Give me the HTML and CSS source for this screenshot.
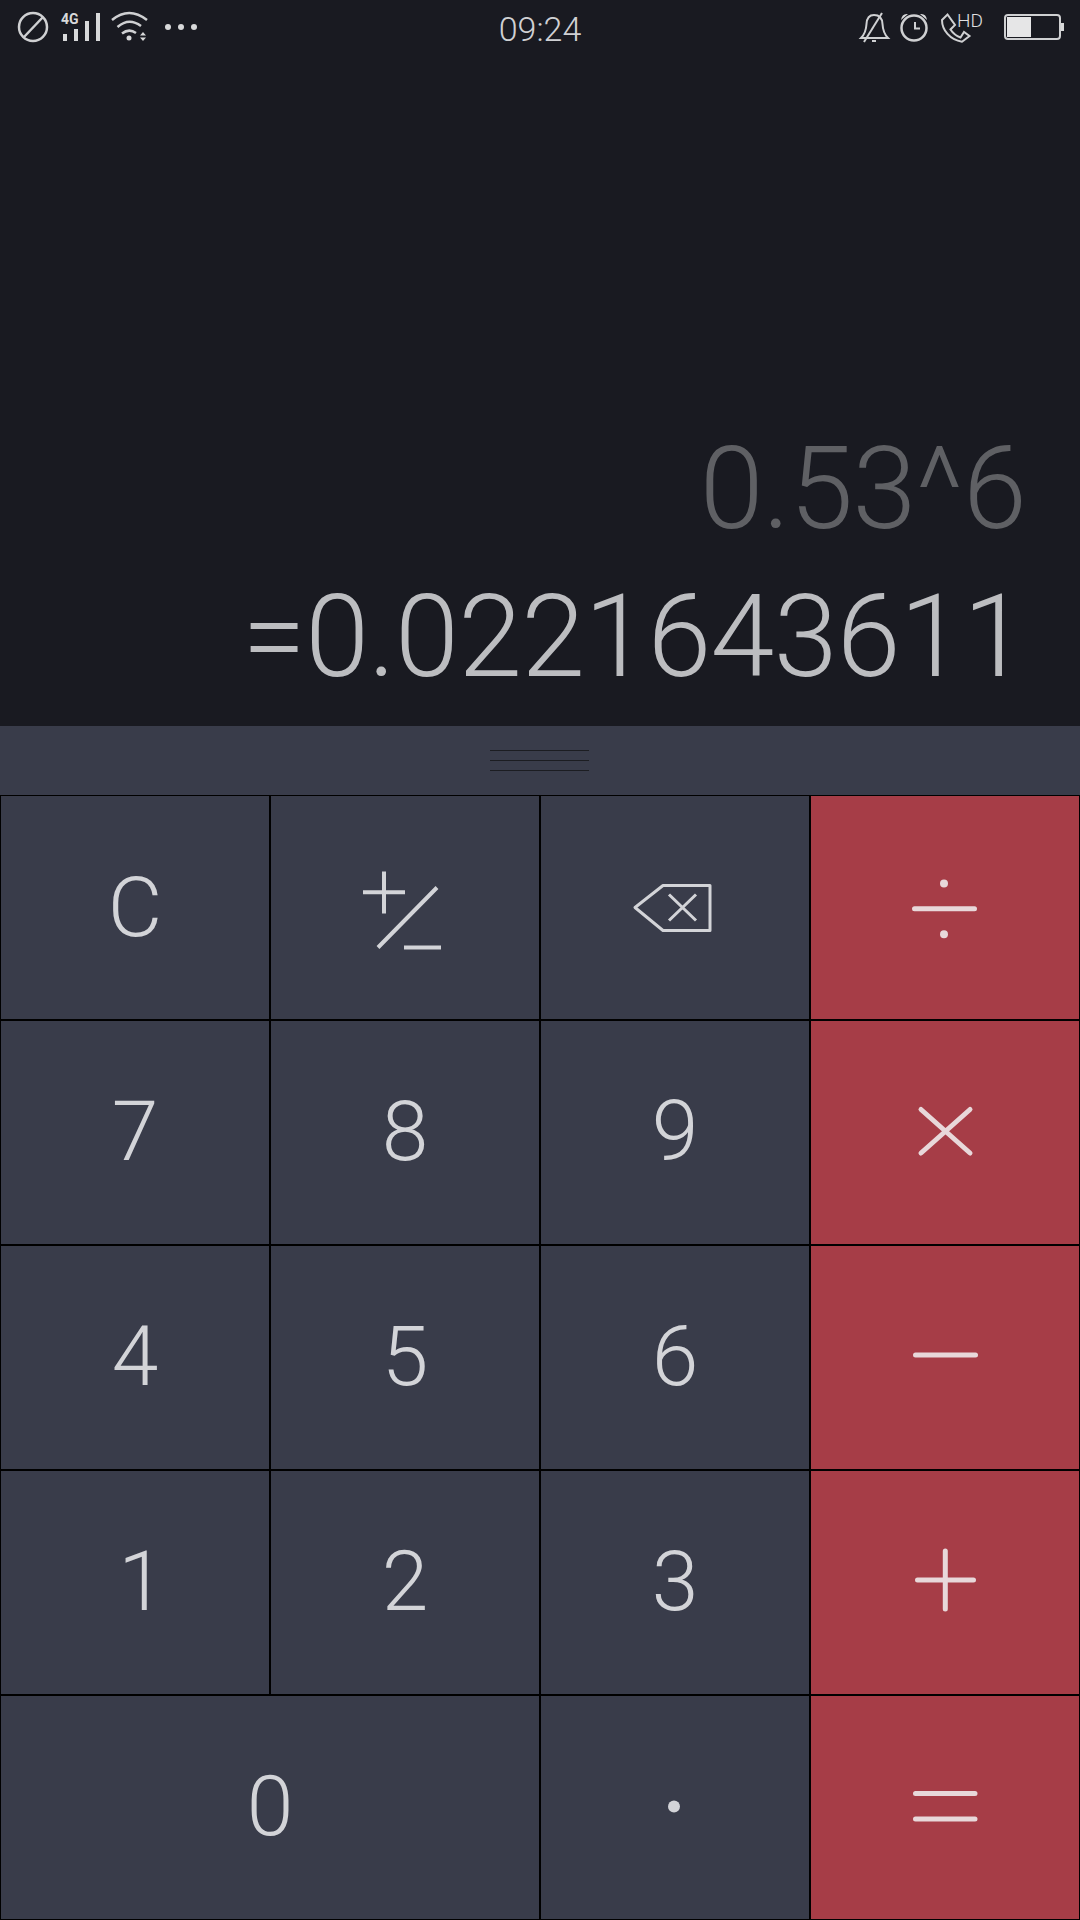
FILE: index.html
```html
<!DOCTYPE html>
<html lang="en">
<head>
    <meta charset="UTF-8">
    <meta name="viewport" content="width=device-width, initial-scale=1.0">
    <title>Calculator</title>
    <link rel="stylesheet" href="styles.css">
</head>
<body>

    <div class="screen">
        <div class="top">
            <div class="status-bar">
                <svg class="status-left" width="210" height="56" viewBox="0 0 210 56">
                    <circle class="line" cx="33" cy="27" r="14"/>
                    <path class="line" d="M24 37 L43 17"/>
                    <text class="net" x="61" y="24">4G</text>
                    <rect class="solid" x="63" y="34" width="4" height="7"/>
                    <rect class="solid" x="74" y="29" width="4" height="12"/>
                    <rect class="solid" x="85" y="21" width="4" height="20"/>
                    <rect class="solid" x="96" y="13" width="4" height="28"/>
                    <path class="line" d="M112 20 Q129 6 147 20 M117.500 27 Q129 17 141 26 M122 33.500 Q129 28 136 33"/>
                    <circle class="solid" cx="129" cy="38" r="2.500"/>
                    <path class="solid" d="M143 32 L146 35.500 H140 Z M143 41 L146 37.500 H140 Z"/>
                    <circle class="solid" cx="168" cy="27" r="3"/>
                    <circle class="solid" cx="181" cy="27" r="3"/>
                    <circle class="solid" cx="194" cy="27" r="3"/>
                </svg>
                <div class="clock">09:24</div>
                <svg class="status-right" width="230" height="56" viewBox="0 0 230 56">
                    <path class="line fine" d="M11 38 Q16 33 16.500 24 Q17 15 24 15 Q32 15 32.500 24 Q33 33 38 38 Z"/>
                    <path class="line fine" d="M14 42 L32 13"/>
                    <path class="line fine" d="M22 41 H26"/>
                    <circle class="line" cx="64" cy="28" r="12.500"/>
                    <path class="line fine" d="M65 22 V28.500 H70"/>
                    <path class="solid" d="M51 20 Q52 13 58 14 Z M77 20 Q76 13 70 14 Z"/>
                    <path class="line fine" d="M92 20 L97.500 14.500 L105 25 L100.500 29.500 Q104 35 110.500 37.500 L114 32 L119.500 36 L112 41.700 C100 40 92 30 92 20 Z"/>
                    <text class="hd" x="107" y="27">HD</text>
                    <rect class="line fine" x="155" y="15" width="55" height="24" rx="3"/>
                    <rect class="battery-fill" x="157" y="17" width="24" height="20"/>
                    <rect class="solid" x="211" y="23" width="3" height="8"/>
                </svg>
            </div>
            <div class="display">
                <div class="expr">0.53^6</div>
                <div class="result">=0.0221643611</div>
            </div>
        </div>

        <div class="handle">
            <span></span>
            <span></span>
            <span></span>
        </div>

        <div class="keypad">
            <div class="key">C</div>
            <div class="key">
                <svg width="90" height="90" viewBox="0 0 90 90">
                    <path class="glyph" d="M3 29.200 H45 M24 8.500 V50.500 M18 84.500 L77 24.500 M44 84.500 H81"/>
                </svg>
            </div>
            <div class="key">
                <svg width="90" height="60" viewBox="0 0 90 60">
                    <path class="glyph thin" d="M5 29.500 L33 7.500 H80 V52.500 H33 Z M39 16.500 L66 42.500 M66 16.500 L39 42.500"/>
                </svg>
            </div>
            <div class="key op">
                <svg width="90" height="90" viewBox="0 0 90 90">
                    <path class="glyph round" d="M14.500 45.800 H74.500"/>
                    <circle class="dot" cx="44" cy="20.500" r="4"/>
                    <circle class="dot" cx="44" cy="71.200" r="4"/>
                </svg>
            </div>

            <div class="key num">7</div>
            <div class="key num">8</div>
            <div class="key num">9</div>
            <div class="key op">
                <svg width="90" height="90" viewBox="0 0 90 90">
                    <path class="glyph round" d="M21 21.500 L70 65 M70 21.500 L21 65"/>
                </svg>
            </div>

            <div class="key num">4</div>
            <div class="key num">5</div>
            <div class="key num">6</div>
            <div class="key op">
                <svg width="90" height="90" viewBox="0 0 90 90">
                    <path class="glyph round" d="M15.500 42 H75.500"/>
                </svg>
            </div>

            <div class="key num one">1</div>
            <div class="key num">2</div>
            <div class="key num">3</div>
            <div class="key op">
                <svg width="90" height="90" viewBox="0 0 90 90">
                    <path class="glyph round" d="M17.500 42 H73.500 M45.300 13 V71"/>
                </svg>
            </div>

            <div class="key num wide">0</div>
            <div class="key">
                <svg width="90" height="90" viewBox="0 0 90 90">
                    <circle class="dot" cx="44" cy="43.500" r="6"/>
                </svg>
            </div>
            <div class="key op">
                <svg width="90" height="90" viewBox="0 0 90 90">
                    <path class="glyph round" d="M15.500 30.500 H75 M15.500 55.900 H75"/>
                </svg>
            </div>
        </div>
    </div>

</body>
</html>
```

FILE: styles.css
```css
* {
    box-sizing: border-box;
}

body {
    font-family: 'Roboto', sans-serif;
    font-weight: 300;
    background-color: #000;
    margin: 0;
    padding: 0;
}

.screen {
    width: 1080px;
    height: 1920px;
    display: flex;
    flex-direction: column;
    overflow: hidden;
}

.top {
    height: 726px;
    background-color: #191a21;
    display: flex;
    flex-direction: column;
    justify-content: space-between;
}

.status-bar {
    height: 56px;
    display: grid;
    grid-template-columns: 1fr auto 1fr;
    align-items: start;
}

.status-bar svg {
    display: block;
}

.status-right {
    justify-self: end;
}

.clock {
    font-size: 34px;
    line-height: 59px;
    color: #d0d1d4;
}

.line {
    fill: none;
    stroke: #cfd0d2;
    stroke-width: 2.5;
}

.line.fine {
    stroke-width: 2;
}

.solid {
    fill: #d8d9da;
}

.battery-fill {
    fill: #e6e6e7;
}

.net {
    font-size: 14px;
    font-weight: 700;
    fill: #d8d9da;
}

.hd {
    font-size: 19px;
    fill: #e0e0e2;
}

.display {
    padding: 0 54px 15px 0;
    text-align: right;
    font-size: 115px;
    line-height: 148px;
    letter-spacing: -0.7px;
}

.expr {
    color: #5f6064;
}

.result {
    color: #bcbdc0;
}

.handle {
    height: 69px;
    background-color: #393c4a;
    display: flex;
    flex-direction: column;
    align-items: center;
    gap: 9px;
    padding: 24px 2px 0 0;
}

.handle span {
    width: 99px;
    height: 1px;
    background-color: #1c1d22;
}

.keypad {
    flex: 1;
    display: grid;
    grid-template-columns: repeat(4, 268px);
    grid-template-rows: repeat(5, 223px);
    gap: 2px;
    padding: 1px;
    background-color: #000;
}

.key {
    background-color: #393c4a;
    color: #d3d4d8;
    font-size: 84px;
    display: flex;
    align-items: center;
    justify-content: center;
}

.key.num {
    padding-bottom: 3px;
}

.key.one {
    padding-left: 13px;
}

.key.wide {
    grid-column: span 2;
}

.key.op {
    background-color: #a63d47;
}

.glyph {
    fill: none;
    stroke: #d3d4d8;
    stroke-width: 4;
}

.glyph.thin {
    stroke-width: 3;
    stroke-linejoin: round;
}

.glyph.round {
    stroke: #e8d8da;
    stroke-width: 5;
    stroke-linecap: round;
}

.dot {
    fill: #d3d4d8;
}

.op .dot {
    fill: #e8d8da;
}
```
